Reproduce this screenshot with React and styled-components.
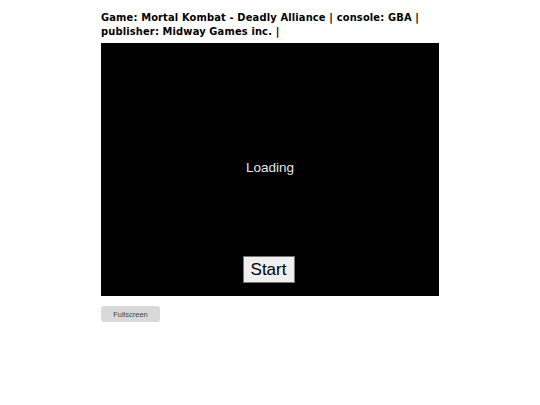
import React from "react";
import styled, { createGlobalStyle } from "styled-components";

const Global = createGlobalStyle`
  html, body { margin: 0; padding: 0; background: #fff; }
  body { font-family: "Liberation Sans", Arial, sans-serif; }
`;

const Page = styled.div`
  width: 338px;
  margin: 0 auto;
  padding-top: 11px;
  display: flex;
  flex-direction: column;
`;

const Title = styled.h1`
  margin: 0 0 4px 0;
  font-family: "DejaVu Sans Condensed", "DejaVu Sans", Verdana, sans-serif;
  font-stretch: condensed;
  font-weight: bold;
  font-size: 11px;
  letter-spacing: 0.15px;
  line-height: 14px;
  color: #000;
`;

const Screen = styled.div`
  width: 338px;
  height: 253px;
  background: #000;
  display: flex;
  flex-direction: column;
  align-items: center;
  box-sizing: border-box;
  padding-top: 116px;
`;

const Loading = styled.div`
  color: #e6e6e6;
  font-family: "Liberation Sans", Arial, sans-serif;
  font-size: 13.5px;
  line-height: 18px;
`;

const StartButton = styled.button`
  margin-top: 79px;
  margin-right: 3px;
  width: 52px;
  height: 27px;
  padding: 0;
  background: #efefef;
  border: 1px solid #767676;
  border-radius: 0;
  font-family: "Liberation Sans", Arial, sans-serif;
  font-size: 17px;
  color: #000;
`;

const FullscreenButton = styled.button`
  margin-top: 10px;
  width: 59px;
  height: 16px;
  padding: 0;
  background: #d9d9d9;
  border: none;
  border-radius: 3px;
  font-family: "Liberation Sans", Arial, sans-serif;
  font-size: 7.5px;
  color: #444;
`;

export default function App() {
  return (
    <>
      <Global />
      <Page>
        <Title>
          Game: Mortal Kombat - Deadly Alliance | console: GBA | publisher: Midway Games inc. |
        </Title>
        <Screen>
          <Loading>Loading</Loading>
          <StartButton>Start</StartButton>
        </Screen>
        <FullscreenButton>Fullscreen</FullscreenButton>
      </Page>
    </>
  );
}
